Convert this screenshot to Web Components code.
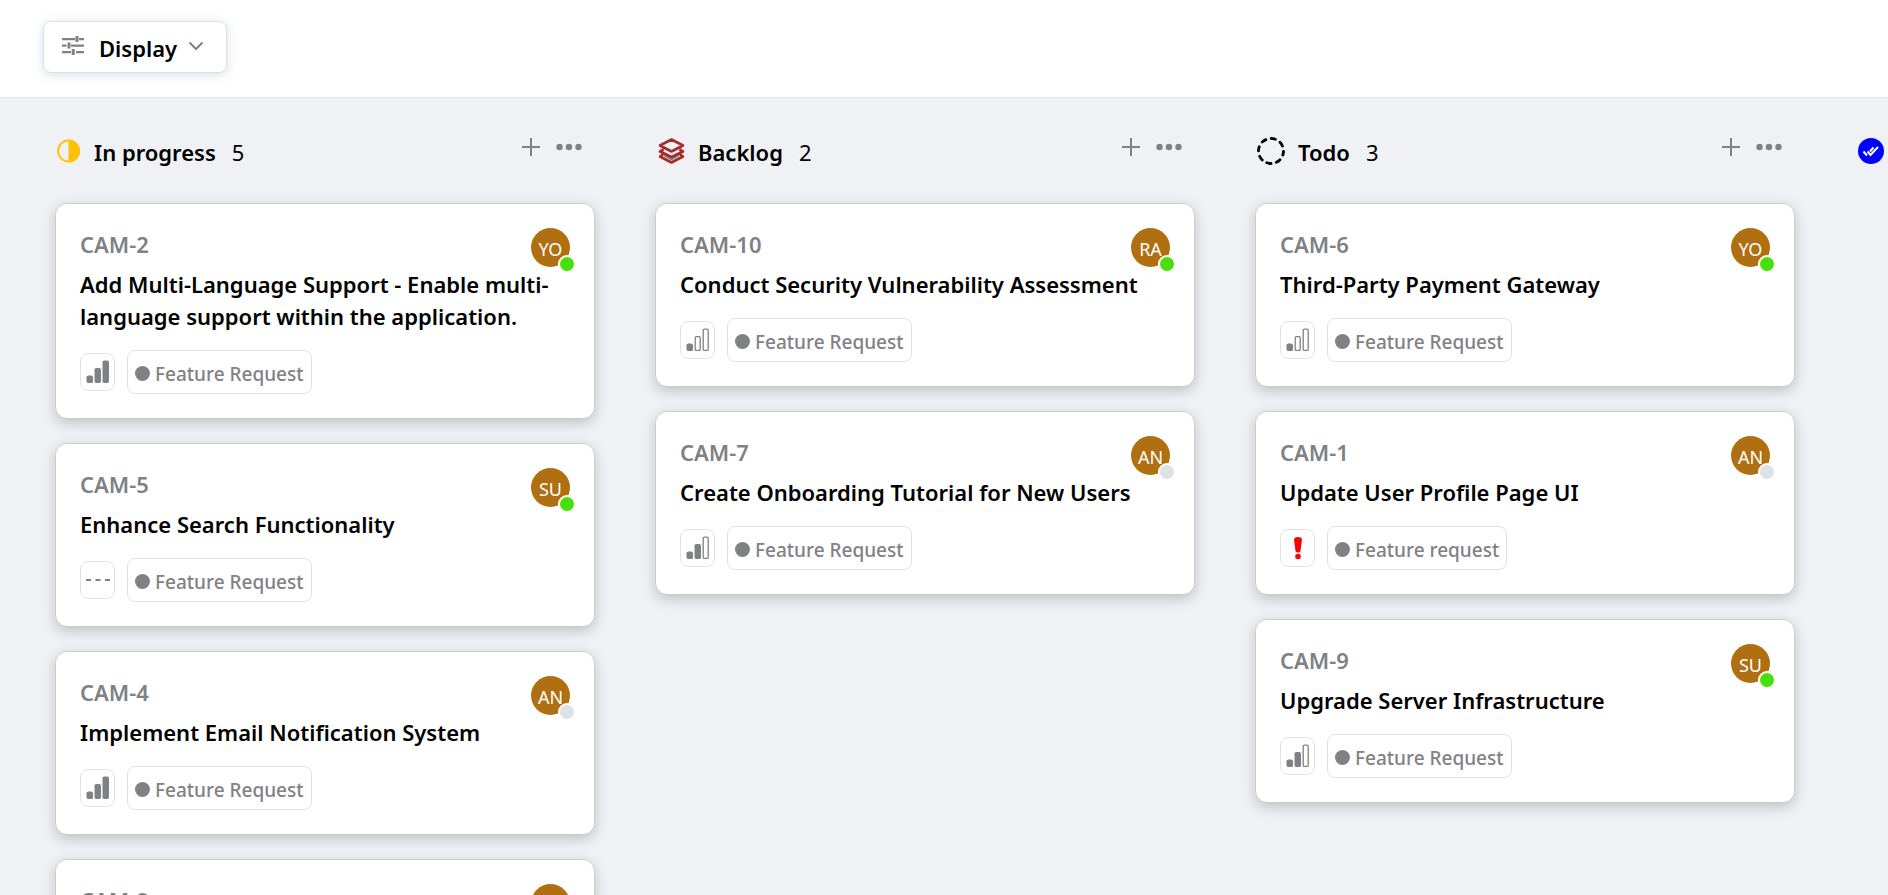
<!DOCTYPE html>
<html lang="en"><head><meta charset="utf-8"><title>Board</title>
<style>
html,body{margin:0;height:100%}
body{background:#eff1f5;overflow:hidden;font-family:"Noto Sans","Open Sans",sans-serif;color:#000}
</style></head><body>
<task-board></task-board>
<script>
const svg=(w,h,vb,body)=>`<svg width="${w}" height="${h}" viewBox="${vb}" fill="none" aria-hidden="true">${body}</svg>`;
const bar=(x,h,full)=>full
  ?`<rect x="${x}" y="${23-h}" width="6.500" height="${h}" rx="1.8" fill="#808184"/>`
  :`<rect x="${x+.7}" y="${23.6-h}" width="5" height="${h-1.2}" rx="1.2" stroke="#808184" stroke-width="1.3"/>`;
const bars=n=>svg(24,24,'0 0 24 24',bar(.5,7.5,n>0)+bar(8.500,15,n>1)+bar(16.500,22.500,n>2));
const ICONS={
  sliders:svg(22,20,'0 0 22 20','<g fill="#808184"><path d="M0 2h13v2.200H0zM17 2h5v2.200h-5zM13.500 0h3v6h-3zM0 8.500h4.500v2.200H0zM9 8.500h13v2.200H9zM5.500 6.500h3v6h-3zM0 15h9v2.200H0zM14 15h8v2.200h-8zM9.700 13h3v6h-3z"/></g>'),
  chevron:svg(16,10,'0 0 16 10','<path d="M1.500 1.500 8 8l6.500-6.500" stroke="#808184" stroke-width="2"/>'),
  plus:svg(18,18,'0 0 18 18','<path d="M9 0v18M0 9h18" stroke="#808184" stroke-width="2"/>'),
  dots:svg(26,8,'0 0 26 8','<g fill="#808184"><circle cx="3.500" cy="4" r="3.200"/><circle cx="13" cy="4" r="3.200"/><circle cx="22.500" cy="4" r="3.200"/></g>'),
  half:svg(24,24,'.5 0 24 24','<circle cx="12" cy="12" r="10.500" stroke="#ffc107" stroke-width="1.900"/><path d="M12 .5a11.500 11.500 0 0 1 0 23z" fill="#ffc107"/>'),
  layers:svg(28,26,'-1.500 0 28 26','<path d="M5 18l8 4.500 8-4.500-2-1.500-6 3-6-3z" fill="#808184"/><g stroke="#a52a2a" stroke-width="2.600" stroke-linejoin="round"><path d="M13 1.500 24.500 7.500 13 13.500 1.500 7.500zM5 11.500l-3.500 2L13 19l11.500-5.500-3.500-2M4.500 16.500 1.500 18.500 13 24.500l11.500-6-3-2"/></g>'),
  todo:svg(28,28,'0 0 28 28','<circle cx="14" cy="14" r="12.500" stroke="#000" stroke-width="2.800" stroke-linecap="round" stroke-dasharray="4.400 5.418" stroke-dashoffset="2.200" transform="rotate(9 14 14)"/>'),
  done:svg(28,26,'-1 0 28 26','<circle cx="13" cy="13" r="13" fill="#00f"/><path d="M5.500 13.500 9 17.500M9.500 13.500l3 3.500 7.500-8M12 13.500l3.500-4" stroke="#fff" stroke-width="2"/>'),
  high:bars(3),medium:bars(2),low:bars(1),
  none:svg(24,24,'0 0 24 24','<path d="M0 12h5M9.500 12h5M19 12h5" stroke="#808184" stroke-width="2"/>'),
  urgent:svg(24,24,'0 0 24 24','<path d="M8 3.500Q8 1 12 1t4 2.500L14.500 15q-.5 1.500-2.500 1.500T9.500 15z" fill="red"/><circle cx="12" cy="20.500" r="2.800" fill="red"/>')
};
const define=(name,css,render)=>customElements.define(name,class extends HTMLElement{
  connectedCallback(){
    if(this.shadowRoot)return;
    this.attachShadow({mode:'open'}).innerHTML=`<style>*{box-sizing:border-box}svg{display:block;flex:none}button{border:0;background:none;padding:0;font:inherit;color:inherit;cursor:pointer}${css}</style>${render(this)}`;
  }
});
define('ui-icon',':host{display:block;flex:none}',e=>ICONS[e.getAttribute('name')]);

define('display-button',`:host{display:block}
button{display:flex;align-items:center;height:52px;padding:0 22px 0 18px;border:1px solid #dee2e6;border-radius:8px;background:#fff;box-shadow:0 2px 10px rgba(176,190,212,.5);font-size:22px;font-weight:600;line-height:32px}
span{margin:2px 11px 0 15px}ui-icon{margin-bottom:2px}`,
()=>`<button type="button" aria-haspopup="menu"><ui-icon name="sliders"></ui-icon><span><slot></slot></span><ui-icon name="chevron"></ui-icon></button>`);

define('user-avatar',`:host{display:block;position:relative;width:39px;height:39px;flex:none}
.face{display:flex;align-items:center;justify-content:center;height:100%;border-radius:50%;background:#b06f10;color:#fff;font-size:18px;line-height:24px;padding-top:3px}
i{position:absolute;right:-6px;bottom:-6px;width:18px;height:18px;border:2px solid #fff;border-radius:50%;background:#dee2e6}
:host([online]) i{background:#48e00c}`,
()=>`<span class="face"><slot></slot></span><i></i>`);

define('task-card',`:host{display:block}
article{border:1px solid #ccc;border-radius:12px;background:#fff;padding:24px;box-shadow:0 4px 14px rgba(0,0,0,.2)}
header{display:flex;justify-content:space-between;height:40px}
.id{font-size:22px;line-height:33px;font-weight:600;color:#808184}
h3{margin:0 -8px 0 0;font-size:22px;line-height:32px;font-weight:600}
footer{display:flex;align-items:center;gap:12px;margin-top:18px}
.priority{display:grid;place-items:center;width:35px;height:38px;border:1px solid #dee2e6;border-radius:8px}
.label{display:flex;align-items:center;gap:5px;height:44px;padding:3px 7px 0;border:1px solid #dee2e6;border-radius:8px;color:#808184;font-size:19px;line-height:26px;font-weight:500}
.label::before{content:"";width:15px;height:15px;border-radius:50%;background:#808184}`,
e=>{const a=n=>e.getAttribute(n);return `<article><header><span class="id">${a('key')}</span><user-avatar ${a('status')}>${a('user')}</user-avatar></header><h3><slot></slot></h3>
<footer><button type="button" class="priority" aria-label="Priority: ${a('priority')}"><ui-icon name="${a('priority')}"></ui-icon></button><span class="label">${a('label')||'Feature Request'}</span></footer></article>`});

define('board-column',`:host{display:block;flex:none;width:540px}
header{display:flex;align-items:center;height:56px;margin-bottom:24px;padding:0 13px 0 2px}
h2{margin:1px 16px 0 0;padding-left:13px;font-size:22px;line-height:32px;font-weight:600}
.count{margin-top:1px;font-size:22px;line-height:32px}
.tools{display:flex;align-items:center;gap:16px;margin-left:auto;padding-bottom:8px}
.cards{display:grid;gap:24px}`,
e=>`<header><ui-icon name="${e.getAttribute('icon')}"></ui-icon><h2>${e.getAttribute('name')}</h2><span class="count">${e.getAttribute('count')}</span>
<div class="tools"><button type="button" aria-label="Add task"><ui-icon name="plus"></ui-icon></button><button type="button" aria-label="Column menu"><ui-icon name="dots"></ui-icon></button></div></header><div class="cards"><slot></slot></div>`);

const card=(key,user,status,priority,title,label='')=>`<task-card key="${key}" user="${user}" status="${status}" priority="${priority}" label="${label}">${title}</task-card>`;
define('task-board',`:host{display:flex;flex-direction:column;height:100%}
.bar{display:flex;padding:21px 43px 24px;background:#fff;border-bottom:1px solid #dee2e6}
main{flex:1;min-height:0;overflow:hidden;display:flex;gap:60px;padding:25px 55px}`,
()=>`<div class="bar"><display-button>Display</display-button></div><main>
<board-column icon="half" name="In progress" count="5">
${card('CAM-2','YO','online','high','Add Multi-Language Support - Enable multi-language support within the application.')}
${card('CAM-5','SU','online','none','Enhance Search Functionality')}
${card('CAM-4','AN','offline','high','Implement Email Notification System')}
${card('CAM-8','AN','offline','high','&nbsp;')}
</board-column>
<board-column icon="layers" name="Backlog" count="2">
${card('CAM-10','RA','online','low','Conduct Security Vulnerability Assessment')}
${card('CAM-7','AN','offline','medium','Create Onboarding Tutorial for New Users')}
</board-column>
<board-column icon="todo" name="Todo" count="3">
${card('CAM-6','YO','online','low','Third-Party Payment Gateway')}
${card('CAM-1','AN','offline','urgent','Update User Profile Page UI','Feature request')}
${card('CAM-9','SU','online','medium','Upgrade Server Infrastructure')}
</board-column>
<board-column icon="done" name="" count=""></board-column></main>`);
</script></body></html>
